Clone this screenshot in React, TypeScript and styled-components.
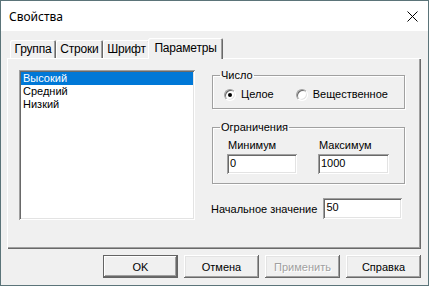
import React from 'react';
import { styled, createGlobalStyle, css } from 'styled-components';

const GlobalStyle = createGlobalStyle`
  html, body {
    margin: 0;
    padding: 0;
    background: #5b7479;
  }
  * {
    box-sizing: border-box;
  }
`;

const raised = css`
  box-shadow:
    inset -1px -1px 0 #696969,
    inset 1px 1px 0 #ffffff,
    inset -2px -2px 0 #a0a0a0,
    inset 2px 2px 0 #e3e3e3;
`;

const sunken = css`
  box-shadow:
    inset 1px 1px 0 #a0a0a0,
    inset -1px -1px 0 #ffffff,
    inset 2px 2px 0 #696969,
    inset -2px -2px 0 #e3e3e3;
`;

const Window = styled.div`
  width: 429px;
  height: 286px;
  border: 1px solid #5b7479;
  background: #f0f0f0;
  display: flex;
  flex-direction: column;
  font-family: 'Liberation Sans', Arial, sans-serif;
  font-size: 11px;
  color: #000;
`;

const TitleBar = styled.div`
  height: 30px;
  background: #ffffff;
  display: flex;
  align-items: center;
  justify-content: space-between;
  padding: 0 10px 0 8px;
`;

const Title = styled.span`
  font-family: 'Noto Sans', 'Open Sans', sans-serif;
  font-size: 12px;
`;

const CloseButton = styled.div`
  width: 12px;
  height: 12px;
  display: flex;
  align-items: center;
  justify-content: center;
`;

const Body = styled.div`
  flex: 1;
  display: flex;
  flex-direction: column;
  padding: 0 7px 0 6px;
`;

const TabStrip = styled.div`
  height: 20px;
  margin-top: 7px;
  padding-left: 3px;
  display: flex;
  align-items: flex-end;
`;

const Tab = styled.div<{ $active?: boolean; $w: number }>`
  width: ${({ $w }) => $w}px;
  height: ${({ $active }) => ($active ? '21px' : '18px')};
  margin: ${({ $active }) => ($active ? '0 -2px -1px' : '0')};
  position: relative;
  z-index: ${({ $active }) => ($active ? 2 : 1)};
  display: flex;
  align-items: center;
  justify-content: center;
  padding-bottom: ${({ $active }) => ($active ? '2px' : '0')};
  white-space: nowrap;
  background: #f0f0f0;
  font-family: 'Liberation Sans', Arial, sans-serif;
  font-size: 12px;
  letter-spacing: -0.2px;
  border-radius: 2px 2px 0 0;
  box-shadow:
    inset 1px 1px 0 #ffffff,
    inset -1px 0 0 #696969,
    inset -2px 0 0 #a0a0a0;
`;

const TabPanel = styled.div`
  height: 191px;
  padding: 12px 0 0 12px;
  display: flex;
  gap: 17px;
  box-shadow:
    inset 1px 1px 0 #ffffff,
    inset -1px -1px 0 #696969,
    inset -2px -2px 0 #a0a0a0;
`;

const ListBox = styled.div`
  width: 176px;
  height: 150px;
  padding: 2px;
  background: #ffffff;
  ${sunken};
`;

const ListItem = styled.div<{ $selected?: boolean }>`
  height: 13px;
  line-height: 13px;
  padding-left: 2px;
  background: ${({ $selected }) => ($selected ? '#0078d7' : 'transparent')};
  color: ${({ $selected }) => ($selected ? '#ffffff' : '#000000')};
`;

const RightColumn = styled.div`
  width: 193px;
  margin-top: -1px;
  display: flex;
  flex-direction: column;
`;

const Group = styled.fieldset<{ $top?: number }>`
  margin: ${({ $top }) => $top ?? 0}px 0 0;
  padding: 0;
  min-width: 0;
  border: 1px solid #a0a0a0;
  box-shadow: inset 1px 1px 0 #ffffff, 1px 1px 0 #ffffff;
`;

const Legend = styled.legend`
  margin-left: 7px;
  padding: 0 1px;
  line-height: 13px;
  font-size: 11px;
`;

const RadioRow = styled.div`
  display: flex;
  align-items: center;
  padding: 6px 0 7px 11px;
  gap: 22px;
`;

const RadioItem = styled.label`
  display: flex;
  align-items: center;
  gap: 5px;
  line-height: 13px;
`;

const RadioCircle = styled.span<{ $checked?: boolean }>`
  width: 12px;
  height: 12px;
  border-radius: 50%;
  background: #ffffff;
  border: 1px solid;
  border-color: #a0a0a0 #ffffff #ffffff #a0a0a0;
  box-shadow: inset 1px 1px 0 #696969, inset -1px -1px 0 #e3e3e3;
  display: flex;
  align-items: center;
  justify-content: center;
  &::after {
    content: '';
    width: 4px;
    height: 4px;
    border-radius: 50%;
    background: ${({ $checked }) => ($checked ? '#000000' : 'transparent')};
  }
`;

const FieldsRow = styled.div`
  display: flex;
  gap: 21px;
  padding: 5px 0 9px 14px;
`;

const Field = styled.div`
  display: flex;
  flex-direction: column;
  gap: 2px;
`;

const FieldLabel = styled.span`
  line-height: 13px;
  padding-left: 1px;
`;

const TextInput = styled.div<{ $w: number; $h?: number }>`
  width: ${({ $w }) => $w}px;
  height: ${({ $h }) => $h ?? 20}px;
  padding: 3px 3px 0;
  line-height: 13px;
  background: #ffffff;
  ${sunken};
`;

const StartRow = styled.div`
  display: flex;
  align-items: center;
  gap: 6px;
  margin: 14px 0 0 -1px;
`;

const ButtonRow = styled.div`
  display: flex;
  justify-content: flex-end;
  gap: 6px;
  margin-top: 6px;
`;

const Button = styled.div<{ $default?: boolean; $disabled?: boolean }>`
  width: 75px;
  height: 23px;
  display: flex;
  align-items: center;
  justify-content: center;
  color: ${({ $disabled }) => ($disabled ? '#a0a0a0' : '#000000')};
  text-shadow: ${({ $disabled }) => ($disabled ? '1px 1px 0 #ffffff' : 'none')};
  ${({ $default }) =>
    $default
      ? css`
          box-shadow:
            inset 0 0 0 1px #646464,
            inset -2px -2px 0 #696969,
            inset 2px 2px 0 #ffffff,
            inset -3px -3px 0 #a0a0a0;
        `
      : raised};
`;

const CloseIcon = () => (
  <svg width="11" height="11" viewBox="0 0 11 11" fill="none" stroke="#000" strokeWidth="1">
    <line x1="0.5" y1="0.5" x2="10.5" y2="10.5" />
    <line x1="10.5" y1="0.5" x2="0.5" y2="10.5" />
  </svg>
);

const tabs = [
  { label: 'Группа', w: 46 },
  { label: 'Строки', w: 47 },
  { label: 'Шрифт', w: 47 },
  { label: 'Параметры', w: 75 },
];
const levels = ['Высокий', 'Средний', 'Низкий'];

export default function App() {
  return (
    <>
      <GlobalStyle />
      <Window>
        <TitleBar>
          <Title>Свойства</Title>
          <CloseButton>
            <CloseIcon />
          </CloseButton>
        </TitleBar>
        <Body>
          <TabStrip>
            {tabs.map((t, i) => (
              <Tab key={t.label} $w={t.w} $active={i === tabs.length - 1}>
                {t.label}
              </Tab>
            ))}
          </TabStrip>
          <TabPanel>
            <ListBox>
              {levels.map((l, i) => (
                <ListItem key={l} $selected={i === 0}>
                  {l}
                </ListItem>
              ))}
            </ListBox>
            <RightColumn>
              <Group>
                <Legend>Число</Legend>
                <RadioRow>
                  <RadioItem>
                    <RadioCircle $checked />
                    Целое
                  </RadioItem>
                  <RadioItem>
                    <RadioCircle />
                    Вещественное
                  </RadioItem>
                </RadioRow>
              </Group>
              <Group $top={12}>
                <Legend>Ограничения</Legend>
                <FieldsRow>
                  <Field>
                    <FieldLabel>Минимум</FieldLabel>
                    <TextInput $w={70}>0</TextInput>
                  </Field>
                  <Field>
                    <FieldLabel>Максимум</FieldLabel>
                    <TextInput $w={71}>1000</TextInput>
                  </Field>
                </FieldsRow>
              </Group>
              <StartRow>
                <span>Начальное значение</span>
                <TextInput $w={79} $h={21}>50</TextInput>
              </StartRow>
            </RightColumn>
          </TabPanel>
          <ButtonRow>
            <Button $default>OK</Button>
            <Button>Отмена</Button>
            <Button $disabled>Применить</Button>
            <Button>Справка</Button>
          </ButtonRow>
        </Body>
      </Window>
    </>
  );
}
